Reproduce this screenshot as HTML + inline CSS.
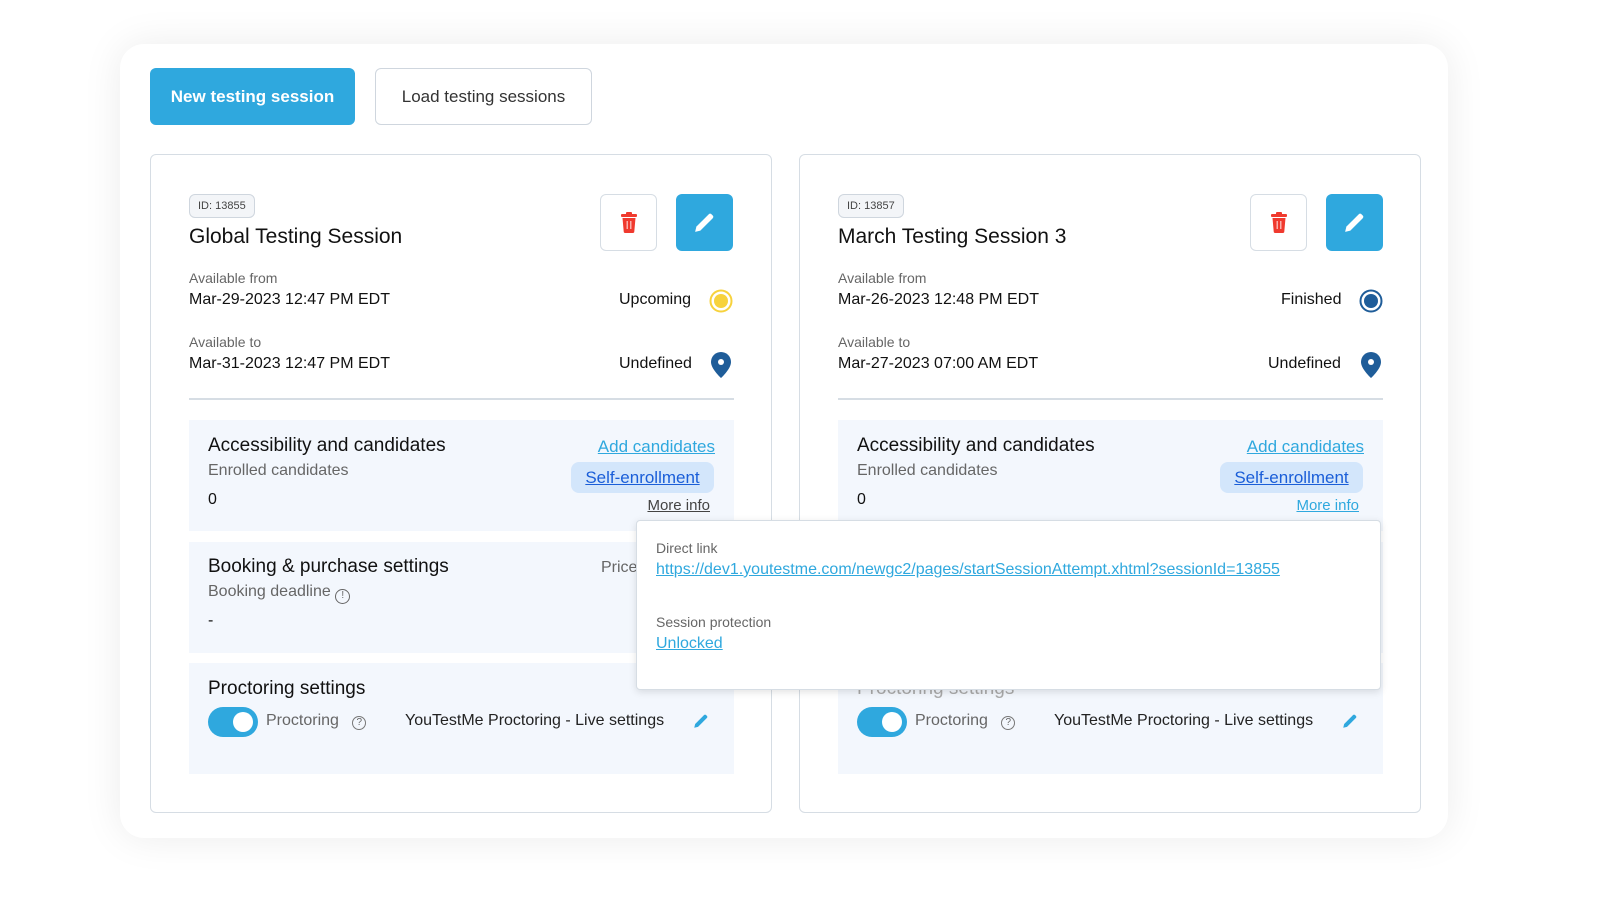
<!DOCTYPE html>
<html><head><meta charset="utf-8"><style>
*{box-sizing:border-box;margin:0;padding:0}
body{width:1600px;height:900px;background:#fff;font-family:"Liberation Sans",Arial,sans-serif;color:#1a1a1a;position:relative;overflow:hidden}
.abs{position:absolute}
.outer{left:120px;top:44px;width:1328px;height:794px;border-radius:24px;background:#fff;box-shadow:0 0 40px rgba(0,0,0,.08)}
.btn1{left:150px;top:68px;width:205px;height:57px;border-radius:6px;background:#2fa8de;color:#fff;font-weight:bold;font-size:17px;line-height:57px;text-align:center}
.btn2{left:375px;top:68px;width:217px;height:57px;border-radius:6px;border:1px solid #cfd6de;background:#fff;color:#333;font-size:17px;line-height:55px;text-align:center}
.card{top:154px;width:622px;height:659px;border:1px solid #d6dde4;border-radius:6px;background:#fff}
.id{top:39px;height:24px;padding:0 8px;border:1px solid #cfd6de;border-radius:6px;background:#f3f5f8;font-size:11px;line-height:22px;color:#444}
.title{top:70px;font-size:21px;color:#111}
.lbl{font-size:14px;color:#666}
.val{font-size:16px;color:#111}
.del{top:39px;width:57px;height:57px;border:1px solid #d6dde4;border-radius:6px;background:#fff}
.edit{top:39px;width:57px;height:57px;border-radius:6px;background:#2fa8de}
.hr{top:243px;height:2px;background:#d6dde4}
.sec{background:#f3f7fd}
.h{font-size:19px;color:#111}
.link{color:#2fa8de;text-decoration:underline;font-size:17px}
.pill{background:#d3e6fb;border-radius:8px;color:#1a5ed8;text-decoration:underline;font-size:17px;text-align:center}
.tog{width:50px;height:30px;border-radius:15px;background:#2fa8de}
.tog:after{content:"";position:absolute;right:5px;top:5px;width:20px;height:20px;border-radius:50%;background:#fff}
.pop{left:636px;top:520px;width:745px;height:170px;background:#fff;border:1px solid #d6dde4;border-radius:4px;box-shadow:0 2px 8px rgba(0,0,0,.12)}
</style></head><body>
<div class="abs outer"></div>
<div class="abs btn1">New testing session</div>
<div class="abs btn2">Load testing sessions</div>

<!-- LEFT CARD -->
<div class="abs card" style="left:150px">
 <div class="abs id" style="left:38px">ID: 13855</div>
 <div class="abs title" style="left:38px">Global Testing Session</div>
 <div class="abs del" style="left:449px"><svg class="abs" style="left:19px;top:17px" width="18" height="21" viewBox="0 0 18 21"><rect x="1" y="2" width="16" height="3" rx="1" fill="#f03a2e"/><rect x="6" y="0" width="6" height="3" rx="1" fill="#f03a2e"/><path d="M2.5 6h13l-1.2 13.5a1.5 1.5 0 0 1-1.5 1.5H5.2a1.5 1.5 0 0 1-1.5-1.5z" fill="#f03a2e"/><rect x="6.5" y="9" width="1.5" height="8" fill="#fff" opacity=".6"/><rect x="10" y="9" width="1.5" height="8" fill="#fff" opacity=".6"/></svg></div>
 <div class="abs edit" style="left:525px"><svg class="abs" style="left:16px;top:16px" width="25" height="25" viewBox="0 0 24 24"><path d="M3 21l1.2-5L16 4.2a2 2 0 0 1 2.8 0l1 1a2 2 0 0 1 0 2.8L8 19.8z" fill="#fff"/></svg></div>
 <div class="abs lbl" style="left:38px;top:115px">Available from</div>
 <div class="abs val" style="left:38px;top:136px">Mar-29-2023 12:47 PM EDT</div>
 <div class="abs val" style="left:468px;top:136px">Upcoming</div>
 <svg class="abs" style="left:558px;top:134px" width="24" height="24"><circle cx="12" cy="12" r="10.5" fill="none" stroke="#f7d23d" stroke-width="2"/><circle cx="12" cy="12" r="7" fill="#f7d23d"/></svg>
 <div class="abs lbl" style="left:38px;top:179px">Available to</div>
 <div class="abs val" style="left:38px;top:200px">Mar-31-2023 12:47 PM EDT</div>
 <div class="abs val" style="left:468px;top:200px">Undefined</div>
 <svg class="abs" style="left:560px;top:197px" width="20" height="26" viewBox="0 0 20 26"><path d="M10 0a10 10 0 0 1 10 10c0 7-10 16-10 16S0 17 0 10A10 10 0 0 1 10 0z" fill="#1f5d99"/><circle cx="10" cy="10" r="3" fill="#fff"/></svg>
 <div class="abs hr" style="left:38px;width:545px"></div>
 <div class="abs sec" style="left:38px;top:265px;width:545px;height:111px">
  <div class="abs h" style="left:19px;top:15px">Accessibility and candidates</div>
  <div class="abs lbl" style="left:19px;top:42px;font-size:16px">Enrolled candidates</div>
  <div class="abs val" style="left:19px;top:71px">0</div>
  <div class="abs link" style="right:19px;top:17px">Add candidates</div>
  <div class="abs pill" style="left:382px;top:42px;width:143px;height:31px;line-height:31px">Self-enrollment</div>
  <div class="abs" style="right:24px;top:77px;font-size:15px;color:#444;text-decoration:underline">More info</div>
 </div>
 <div class="abs sec" style="left:38px;top:387px;width:545px;height:111px">
  <div class="abs h" style="left:19px;top:14px">Booking &amp; purchase settings</div>
  <div class="abs lbl" style="left:19px;top:41px;font-size:16px">Booking deadline <span style="display:inline-block;width:15px;height:15px;border:1.5px solid #666;border-radius:50%;font-size:10px;text-align:center;line-height:12px;vertical-align:-2px">!</span></div>
  <div class="abs val" style="left:19px;top:70px">-</div>
  <div class="abs lbl" style="left:412px;top:17px;font-size:16px">Price</div>
 </div>
 <div class="abs sec" style="left:38px;top:508px;width:545px;height:111px">
  <div class="abs h" style="left:19px;top:15px">Proctoring settings</div>
  <div class="abs tog" style="left:19px;top:44px"></div>
  <div class="abs lbl" style="left:77px;top:49px;font-size:16px">Proctoring &nbsp;&nbsp;<span style="display:inline-block;width:14px;height:14px;border:1.3px solid #777;border-radius:50%;font-size:10px;text-align:center;line-height:12px;vertical-align:0">?</span></div>
  <div class="abs val" style="left:216px;top:49px;color:#222">YouTestMe Proctoring - Live settings</div>
  <svg class="abs" style="left:503px;top:49px" width="18" height="18" viewBox="0 0 24 24"><path d="M3 21l1.2-5L16 4.2a2 2 0 0 1 2.8 0l1 1a2 2 0 0 1 0 2.8L8 19.8z" fill="#2fa8de"/></svg>
 </div>
</div>

<!-- RIGHT CARD -->
<div class="abs card" style="left:799px">
 <div class="abs id" style="left:38px">ID: 13857</div>
 <div class="abs title" style="left:38px">March Testing Session 3</div>
 <div class="abs del" style="left:450px"><svg class="abs" style="left:19px;top:17px" width="18" height="21" viewBox="0 0 18 21"><rect x="1" y="2" width="16" height="3" rx="1" fill="#f03a2e"/><rect x="6" y="0" width="6" height="3" rx="1" fill="#f03a2e"/><path d="M2.5 6h13l-1.2 13.5a1.5 1.5 0 0 1-1.5 1.5H5.2a1.5 1.5 0 0 1-1.5-1.5z" fill="#f03a2e"/><rect x="6.5" y="9" width="1.5" height="8" fill="#fff" opacity=".6"/><rect x="10" y="9" width="1.5" height="8" fill="#fff" opacity=".6"/></svg></div>
 <div class="abs edit" style="left:526px"><svg class="abs" style="left:16px;top:16px" width="25" height="25" viewBox="0 0 24 24"><path d="M3 21l1.2-5L16 4.2a2 2 0 0 1 2.8 0l1 1a2 2 0 0 1 0 2.8L8 19.8z" fill="#fff"/></svg></div>
 <div class="abs lbl" style="left:38px;top:115px">Available from</div>
 <div class="abs val" style="left:38px;top:136px">Mar-26-2023 12:48 PM EDT</div>
 <div class="abs val" style="left:481px;top:136px">Finished</div>
 <svg class="abs" style="left:559px;top:134px" width="24" height="24"><circle cx="12" cy="12" r="10.5" fill="none" stroke="#1f5d99" stroke-width="2"/><circle cx="12" cy="12" r="7" fill="#1f5d99"/></svg>
 <div class="abs lbl" style="left:38px;top:179px">Available to</div>
 <div class="abs val" style="left:38px;top:200px">Mar-27-2023 07:00 AM EDT</div>
 <div class="abs val" style="left:468px;top:200px">Undefined</div>
 <svg class="abs" style="left:561px;top:197px" width="20" height="26" viewBox="0 0 20 26"><path d="M10 0a10 10 0 0 1 10 10c0 7-10 16-10 16S0 17 0 10A10 10 0 0 1 10 0z" fill="#1f5d99"/><circle cx="10" cy="10" r="3" fill="#fff"/></svg>
 <div class="abs hr" style="left:38px;width:545px"></div>
 <div class="abs sec" style="left:38px;top:265px;width:545px;height:111px">
  <div class="abs h" style="left:19px;top:15px">Accessibility and candidates</div>
  <div class="abs lbl" style="left:19px;top:42px;font-size:16px">Enrolled candidates</div>
  <div class="abs val" style="left:19px;top:71px">0</div>
  <div class="abs link" style="right:19px;top:17px">Add candidates</div>
  <div class="abs pill" style="left:382px;top:42px;width:143px;height:31px;line-height:31px">Self-enrollment</div>
  <div class="abs" style="right:24px;top:77px;font-size:15px;color:#2fa8de;text-decoration:underline">More info</div>
 </div>
 <div class="abs sec" style="left:38px;top:387px;width:545px;height:111px"></div>
 <div class="abs sec" style="left:38px;top:508px;width:545px;height:111px">
  <div class="abs h" style="left:19px;top:15px;color:#aaa">Proctoring settings</div>
  <div class="abs tog" style="left:19px;top:44px"></div>
  <div class="abs lbl" style="left:77px;top:49px;font-size:16px">Proctoring &nbsp;&nbsp;<span style="display:inline-block;width:14px;height:14px;border:1.3px solid #777;border-radius:50%;font-size:10px;text-align:center;line-height:12px;vertical-align:0">?</span></div>
  <div class="abs val" style="left:216px;top:49px;color:#222">YouTestMe Proctoring - Live settings</div>
  <svg class="abs" style="left:503px;top:49px" width="18" height="18" viewBox="0 0 24 24"><path d="M3 21l1.2-5L16 4.2a2 2 0 0 1 2.8 0l1 1a2 2 0 0 1 0 2.8L8 19.8z" fill="#2fa8de"/></svg>
 </div>
</div>

<div class="abs pop">
 <div class="abs lbl" style="left:19px;top:19px">Direct link</div>
 <div class="abs" style="left:19px;top:40px;font-size:16px;color:#2fa8de;text-decoration:underline">https://dev1.youtestme.com/newgc2/pages/startSessionAttempt.xhtml?sessionId=13855</div>
 <div class="abs lbl" style="left:19px;top:93px">Session protection</div>
 <div class="abs" style="left:19px;top:114px;font-size:16px;color:#2fa8de;text-decoration:underline">Unlocked</div>
</div>
</body></html>
